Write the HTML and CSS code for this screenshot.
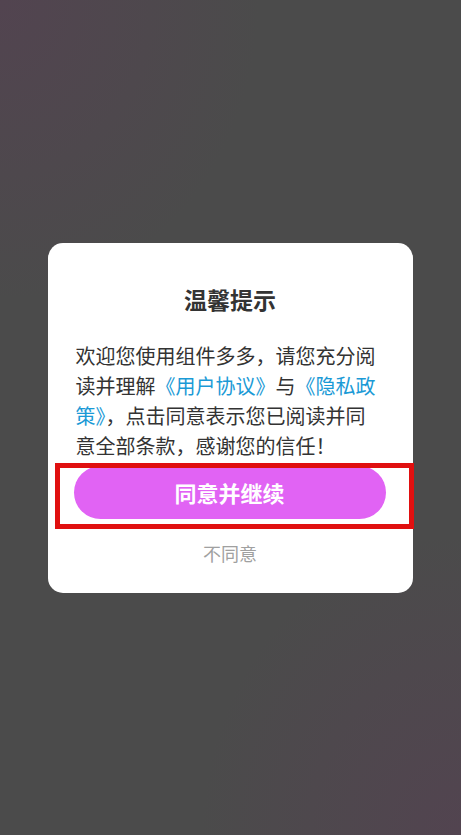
FILE: index.html
```html
<!DOCTYPE html>
<html lang="zh-CN">
<head>
	<meta charset="UTF-8" />
	<meta name="viewport" content="width=device-width, initial-scale=1.0"/>
	<title>温馨提示</title>
	<link rel="stylesheet" href="styles.css">
</head>
<body>
<div class="dialog">
	<h2 class="dialog-title">温馨提示</h2>
	<p class="dialog-text">欢迎您使用组件多多，请您充分阅读并理解<a class="link" href="#">《用户协议》</a>与<a class="link" href="#">《隐私政策》</a>，点击同意表示您已阅读并同意全部条款，感谢您的信任！</p>
	<div class="agree-wrap">
		<button class="agree-button">同意并继续</button>
		<div class="highlight-box"></div>
	</div>
	<button class="disagree-button">不同意</button>
</div>
</body>
</html>
```

FILE: styles.css
```css
body, html {
	margin: 0;
	height: 100%;
}
body {
	display: flex;
	justify-content: center;
	align-items: center;
	font-family: "Noto Sans CJK SC", "Noto Sans", sans-serif;
	background:
		radial-gradient(ellipse 260px 300px at 0 0, rgba(88, 62, 84, 0.55), rgba(88, 62, 84, 0)),
		radial-gradient(ellipse 260px 300px at 100% 100%, rgba(88, 62, 84, 0.55), rgba(88, 62, 84, 0)),
		#4b4b4b;
}
.dialog {
	width: 365px;
	box-sizing: border-box;
	padding: 40px 28px 27px;
	background-color: #fff;
	border-radius: 15px;
	display: flex;
	flex-direction: column;
	margin-left: -1px;
}
.dialog-title {
	margin: 0;
	text-align: center;
	font-size: 23px;
	line-height: 32px;
	font-weight: bold;
	color: #333;
}
.dialog-text {
	margin: 26px 0 0;
	font-size: 20px;
	line-height: 30px;
	color: #333;
}
.link {
	color: #1b9ad6;
	text-decoration: none;
}
.agree-wrap {
	position: relative;
	margin-top: 5px;
}
.agree-button {
	display: block;
	width: 312px;
	height: 53px;
	margin-left: -2px;
	border: none;
	border-radius: 27px;
	background-color: #e163f4;
	color: #fff;
	font-family: inherit;
	font-size: 22px;
	font-weight: bold;
}
.highlight-box {
	position: absolute;
	left: -21px;
	right: -29px;
	top: -3px;
	bottom: -10px;
	border: 5px solid #e01010;
}
.disagree-button {
	margin-top: 21px;
	border: none;
	background: none;
	font-family: inherit;
	font-size: 18px;
	line-height: 24px;
	color: #a0a0a0;
}
```
